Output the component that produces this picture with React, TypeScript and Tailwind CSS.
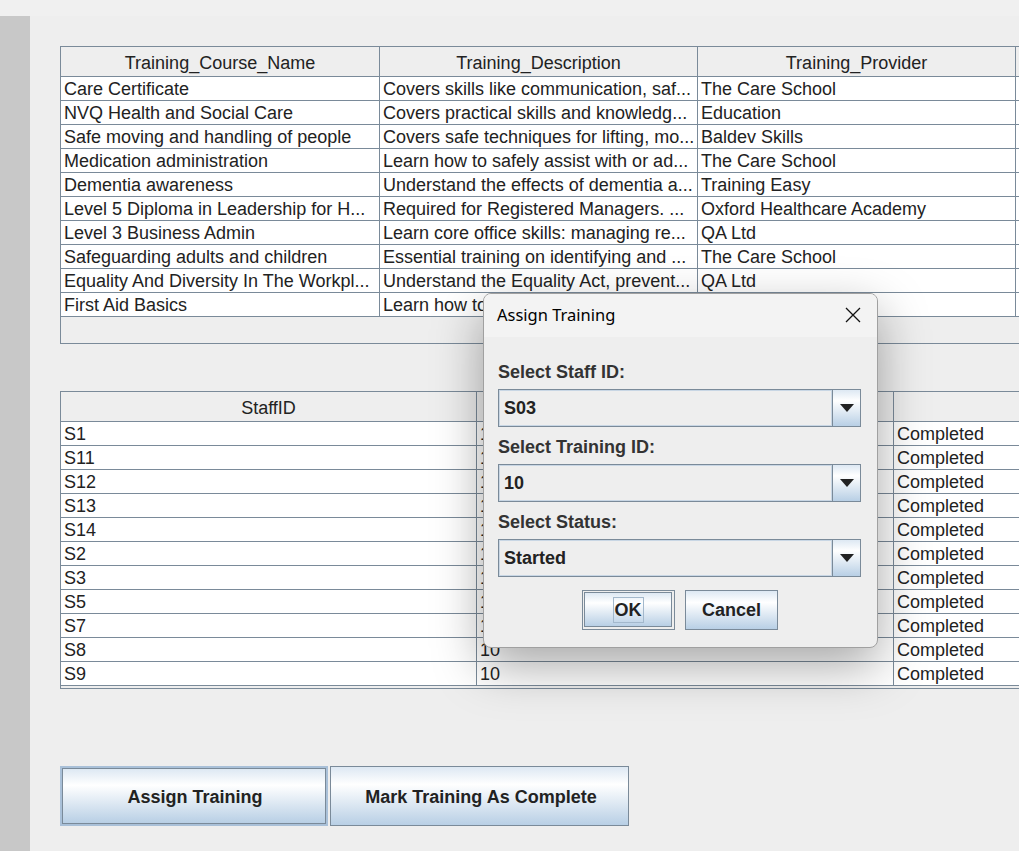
import React from "react";

const courses = [
  ["Care Certificate", "Covers skills like communication, saf...", "The Care School"],
  ["NVQ Health and Social Care", "Covers practical skills and knowledg...", "Education"],
  ["Safe moving and handling of people", "Covers safe techniques for lifting, mo...", "Baldev Skills"],
  ["Medication administration", "Learn how to safely assist with or ad...", "The Care School"],
  ["Dementia awareness", "Understand the effects of dementia a...", "Training Easy"],
  ["Level 5 Diploma in Leadership for H...", "Required for Registered Managers. ...", "Oxford Healthcare Academy"],
  ["Level 3 Business Admin", "Learn core office skills: managing re...", "QA Ltd"],
  ["Safeguarding adults and children", "Essential training on identifying and ...", "The Care School"],
  ["Equality And Diversity In The Workpl...", "Understand the Equality Act, prevent...", "QA Ltd"],
  ["First Aid Basics", "Learn how to", ""],
];

const staff = ["S1", "S11", "S12", "S13", "S14", "S2", "S3", "S5", "S7", "S8", "S9"];

const btnGrad =
  "bg-[linear-gradient(180deg,#dde8f3_0%,#ffffff_30%,#b8cfe5_100%)]";

function Combo({ value }: { value: string }) {
  return (
    <div className="flex h-[38px] w-[363px] border border-[#7a8a99] bg-[#eeeeee]">
      <div className="flex flex-1 items-center border border-[#c8d6e4] pl-[4px] text-[18px] font-bold text-[#222]">
        {value}
      </div>
      <div className={`flex w-[28px] items-center justify-center border-l border-[#7a8a99] ${btnGrad}`}>
        <svg width="14" height="8" viewBox="0 0 14 8">
          <path d="M0 0h14L7 8z" fill="#222" />
        </svg>
      </div>
    </div>
  );
}

export default function App() {
  return (
    <div className="relative h-[851px] w-[1019px] overflow-hidden bg-[#f0f0f0] font-['Liberation_Sans',Arial,sans-serif] text-[#222]">
      <div className="h-[16px]" />
      <div className="flex h-[835px]">
        <div className="w-[30px] bg-[#c8c8c8]" />
        <div className="flex-1 overflow-hidden bg-[#eeeeee] pl-[30px] pt-[30px]">
          {/* courses table */}
          <div className="h-[298px] w-[1300px] border border-[#7a8a99] bg-[#eeeeee]">
            <div className="flex h-[30px] border-b border-[#7a8a99] pt-[3px] text-[18px]">
              {["Training_Course_Name", "Training_Description", "Training_Provider", ""].map((h, i) => (
                <div
                  key={i}
                  className={`-mt-[3px] flex items-center justify-center border-r border-[#7a8a99] pt-[3px] ${i === 0 ? "w-[319px]" : "w-[318px]"}`}
                >
                  {h}
                </div>
              ))}
            </div>
            {courses.map((r, i) => (
              <div key={i} className="flex h-[24px] border-b border-[#7a8a99] bg-white text-[18px] leading-[25px]">
                {[...r, ""].map((c, j) => (
                  <div
                    key={j}
                    className={`overflow-hidden whitespace-nowrap border-r border-[#7a8a99] pl-[3px] ${j === 0 ? "w-[319px]" : "w-[318px]"}`}
                  >
                    {c}
                  </div>
                ))}
              </div>
            ))}
          </div>

          {/* staff training table */}
          <div className="mt-[47px] h-[298px] w-[1300px] border border-[#7a8a99] bg-[#eeeeee]">
            <div className="flex h-[30px] border-b border-[#7a8a99] text-[18px]">
              {["StaffID", "TrainingID", ""].map((h, i) => (
                <div
                  key={i}
                  className={`flex items-center justify-center border-r border-[#7a8a99] pt-[3px] ${i === 0 ? "w-[416px]" : "w-[417px]"}`}
                >
                  {h}
                </div>
              ))}
            </div>
            {staff.map((s, i) => (
              <div key={i} className="flex h-[24px] border-b border-[#7a8a99] bg-white text-[18px] leading-[25px]">
                <div className="w-[416px] overflow-hidden border-r border-[#7a8a99] pl-[3px]">{s}</div>
                <div className="w-[417px] overflow-hidden border-r border-[#7a8a99] pl-[3px]">10</div>
                <div className="w-[417px] overflow-hidden border-r border-[#7a8a99] pl-[3px]">Completed</div>
              </div>
            ))}
          </div>

          {/* action buttons */}
          <div className="mt-[77px] flex gap-[2px]">
            <div className="h-[60px] w-[268px] border-2 border-[#a9c0d8]">
              <div className={`flex h-full items-center justify-center border border-[#7a8a99] pl-[2px] pt-[2px] text-[18px] font-bold ${btnGrad}`}>
                Assign Training
              </div>
            </div>
            <div className={`flex h-[60px] w-[299px] items-center justify-center border border-[#7a8a99] pl-[3px] pt-[2px] text-[18px] font-bold ${btnGrad}`}>
              Mark Training As Complete
            </div>
          </div>
        </div>
      </div>

      {/* Assign Training dialog */}
      <div className="absolute left-[483px] top-[293px] flex h-[355px] w-[395px] flex-col overflow-hidden rounded-[8px] border border-[#a0a0a0] bg-[#eeeeee] shadow-[0_18px_50px_rgba(0,0,0,0.35)]">
        <div className="flex h-[43px] items-center justify-between bg-[#f3f3f3] pb-[1px] pl-[13px] pr-[16px] font-['Noto_Sans',sans-serif] text-[16.5px] text-black">
          <span>Assign Training</span>
          <svg width="16" height="16" viewBox="0 0 16 16">
            <path d="M1 1L15 15M15 1L1 15" stroke="#111" strokeWidth="1.3" />
          </svg>
        </div>
        <div className="flex flex-col pl-[14px] pt-[23px]">
          <div className="mb-[5px] h-[24px] text-[18px] font-bold leading-[24px] text-[#333]">Select Staff ID:</div>
          <Combo value="S03" />
          <div className="mb-[5px] mt-[8px] h-[24px] text-[18px] font-bold leading-[24px] text-[#333]">Select Training ID:</div>
          <Combo value="10" />
          <div className="mb-[5px] mt-[8px] h-[24px] text-[18px] font-bold leading-[24px] text-[#333]">Select Status:</div>
          <Combo value="Started" />
          <div className="mt-[13px] flex gap-[10px] pl-[84px]">
            <div className="h-[40px] w-[93px] border border-[#7a8a99] p-[1px] pr-[2px] pb-[2px]">
              <div className={`flex h-full items-center justify-center border border-[#7a8a99] ${btnGrad}`}>
                <span className="border border-[#a3b8cc] px-[1px] text-[18px] font-bold leading-[24px]">OK</span>
              </div>
            </div>
            <div className={`flex h-[40px] w-[93px] items-center justify-center border border-[#7a8a99] text-[18px] font-bold ${btnGrad}`}>
              Cancel
            </div>
          </div>
        </div>
      </div>
    </div>
  );
}
